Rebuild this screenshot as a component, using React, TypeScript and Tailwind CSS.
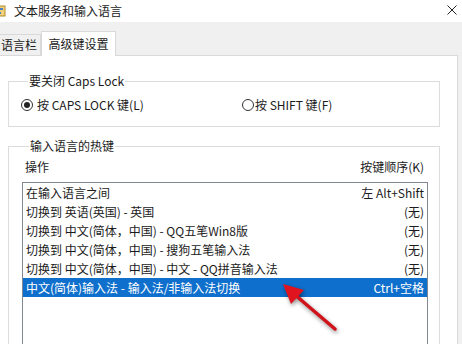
const rows = [
  { name: "在输入语言之间", key: "左 Alt+Shift" },
  { name: "切换到 英语(英国) - 英国", key: "(无)" },
  { name: "切换到 中文(简体，中国) - QQ五笔Win8版", key: "(无)" },
  { name: "切换到 中文(简体，中国) - 搜狗五笔输入法", key: "(无)" },
  { name: "切换到 中文(简体，中国) - 中文 - QQ拼音输入法", key: "(无)" },
  { name: "中文(简体)输入法 - 输入法/非输入法切换", key: "Ctrl+空格", selected: true },
];

function Radio({ checked }: { checked?: boolean }) {
  return (
    <span className="flex h-[12px] w-[12px] shrink-0 items-center justify-center rounded-full border border-[#333]">
      {checked && <span className="h-[6px] w-[6px] rounded-full bg-[#222]" />}
    </span>
  );
}

export default function App() {
  return (
    <div className="relative h-[344px] w-[462px] overflow-hidden bg-[#f0f0f0] font-['Noto_Sans_CJK_SC',sans-serif] text-[12px] text-[#1b1b1b]">
      {/* title bar */}
      <div className="flex h-[22px] items-center bg-white">
        <svg width="14" height="12" viewBox="0 0 14 12" className="-ml-[8px]">
          <rect x="1" y="1" width="12" height="10" fill="#f3d27a" stroke="#b08a2e" />
          <rect x="3" y="3" width="8" height="2" fill="#4a7fc1" />
          <rect x="3" y="7" width="6" height="2" fill="#4a7fc1" />
        </svg>
        <span className="ml-[8px] leading-[16px]">文本服务和输入语言</span>
        <svg width="10" height="10" viewBox="0 0 10 10" className="ml-auto mr-[5px] -mt-[3px]">
          <path d="M0.5 0.5L9.5 9.5M9.5 0.5L0.5 9.5" stroke="#222" strokeWidth="1" />
        </svg>
      </div>

      {/* tabs */}
      <div className="flex h-[33px] items-end">
        <div className="-ml-[6px] h-[21px] w-[47px] border border-b-0 border-[#d9d9d9] pl-[6px] leading-[20px]">
          语言栏
        </div>
        <div className="relative z-10 -mb-px h-[25px] w-[75px] border border-b-0 border-[#d9d9d9] bg-white text-center leading-[23px]">
          高级键设置
        </div>
      </div>

      {/* panel */}
      <div className="h-[300px] w-[458px] border-r border-t border-[#d9d9d9] bg-white px-[8px] pt-[17px]">
        <fieldset className="w-[432px] border border-[#dcdcdc] pb-[13px] pl-[12px] pt-[8px]">
          <legend className="ml-[7px] px-[1px] leading-[16px]">要关闭 Caps Lock</legend>
          <div className="flex h-[16px] items-center">
            <div className="flex w-[221px] items-center gap-[4px]">
              <Radio checked />
              <span>按 CAPS LOCK 键(L)</span>
            </div>
            <div className="flex items-center gap-[1px]">
              <Radio />
              <span>按 SHIFT 键(F)</span>
            </div>
          </div>
        </fieldset>

        <fieldset className="mt-[11px] h-[220px] w-[432px] border border-[#dcdcdc] pl-[13px] pr-[11px] pt-[5px]">
          <legend className="ml-[7px] px-[1px] leading-[16px]">输入语言的热键</legend>
          <div className="mb-[7px] flex h-[16px] items-center justify-between pl-[3px] pr-[4px]">
            <span>操作</span>
            <span>按键顺序(K)</span>
          </div>
          <div className="h-[200px] w-[406px] border border-[#828790]">
            {rows.map((r) => (
              <div
                key={r.name}
                className={
                  r.selected
                    ? "flex h-[19px] items-center justify-between bg-[#0f6fcc] px-[3px] text-white"
                    : "flex h-[19px] items-center justify-between px-[3px]"
                }
              >
                <span>{r.name}</span>
                <span>{r.key}</span>
              </div>
            ))}
          </div>
        </fieldset>
      </div>

      {/* red arrow annotation */}
      <svg
        width="462"
        height="344"
        viewBox="0 0 462 344"
        className="pointer-events-none absolute left-0 top-0 drop-shadow-[1px_2px_2px_rgba(0,0,0,0.45)]"
      >
        <line x1="335" y1="329" x2="294" y2="294" stroke="#d0121b" strokeWidth="3.5" strokeLinecap="round" />
        <polygon points="283,284 304,290 291,304" fill="#e0141e" />
      </svg>
    </div>
  );
}
